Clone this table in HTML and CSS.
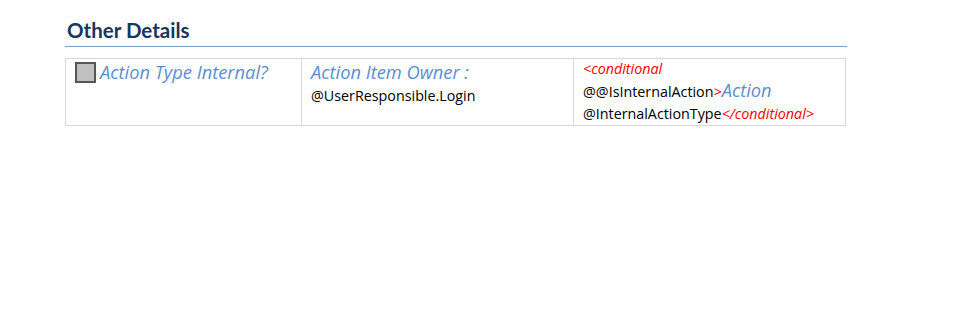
FILE: index.html
```html
<!DOCTYPE html>
<html lang="en">
<head>
  <meta charset="UTF-8" />
  <title>Other Details</title>
  <link rel="stylesheet" href="styles.css">
</head>
<body>

  <!-- Section heading -->
  <section class="section">
    <h2 class="section-title">Other Details</h2>

    <!-- Details table -->
    <table class="details">
      <tr>
        <td class="col-type">
          <span class="checkbox"></span><span class="label">Action Type Internal?</span>
        </td>
        <td class="col-owner">
          <div class="label">Action Item Owner :</div>
          <div class="value">@UserResponsible.Login</div>
        </td>
        <td class="col-cond">
          <div class="tag">&lt;conditional</div>
          <div class="value">@@IsInternalAction<span class="tag">&gt;</span><span class="label">Action</span></div>
          <div class="value">@InternalActionType<span class="tag">&lt;/conditional&gt;</span></div>
        </td>
      </tr>
    </table>
  </section>

</body>
</html>
```

FILE: styles.css
```css
body {
  font-family: "Open Sans", Lato, sans-serif;
  margin: 0;
  padding: 0;
  background-color: #ffffff;
  color: #000000;
}
.section {
  width: 782px;
  margin-left: 65px;
  padding-top: 17px;
}
.section-title {
  margin: 0;
  padding: 0 0 3px 2px;
  font-family: Lato, sans-serif;
  font-size: 20.5px;
  font-weight: bold;
  color: #17365d;
  border-bottom: 1px solid #7f9fc8;
  line-height: 26px;
}
.details {
  margin-top: 11px;
  width: 781px;
  border-collapse: collapse;
}
.details td {
  border: 1px solid #d9d9d9;
  vertical-align: top;
  padding: 0 9px;
}
.col-type {
  width: 217px;
}
.col-owner {
  width: 253px;
}
.label {
  font-style: italic;
  font-size: 18.3px;
  color: #5b8fd0;
  line-height: 26px;
}
.value {
  font-size: 14.3px;
  line-height: 22px;
}
.value .tag,
.value .label {
  line-height: 22px;
}
.tag {
  font-style: italic;
  font-size: 14.3px;
  color: #ff0000;
  line-height: 22px;
}
.col-cond .tag:first-child {
  line-height: 20px;
}
.checkbox {
  display: inline-block;
  width: 17px;
  height: 17px;
  background-color: #c0c0c0;
  border: 2px solid #555555;
  vertical-align: -4px;
  margin-right: 4px;
}
```
